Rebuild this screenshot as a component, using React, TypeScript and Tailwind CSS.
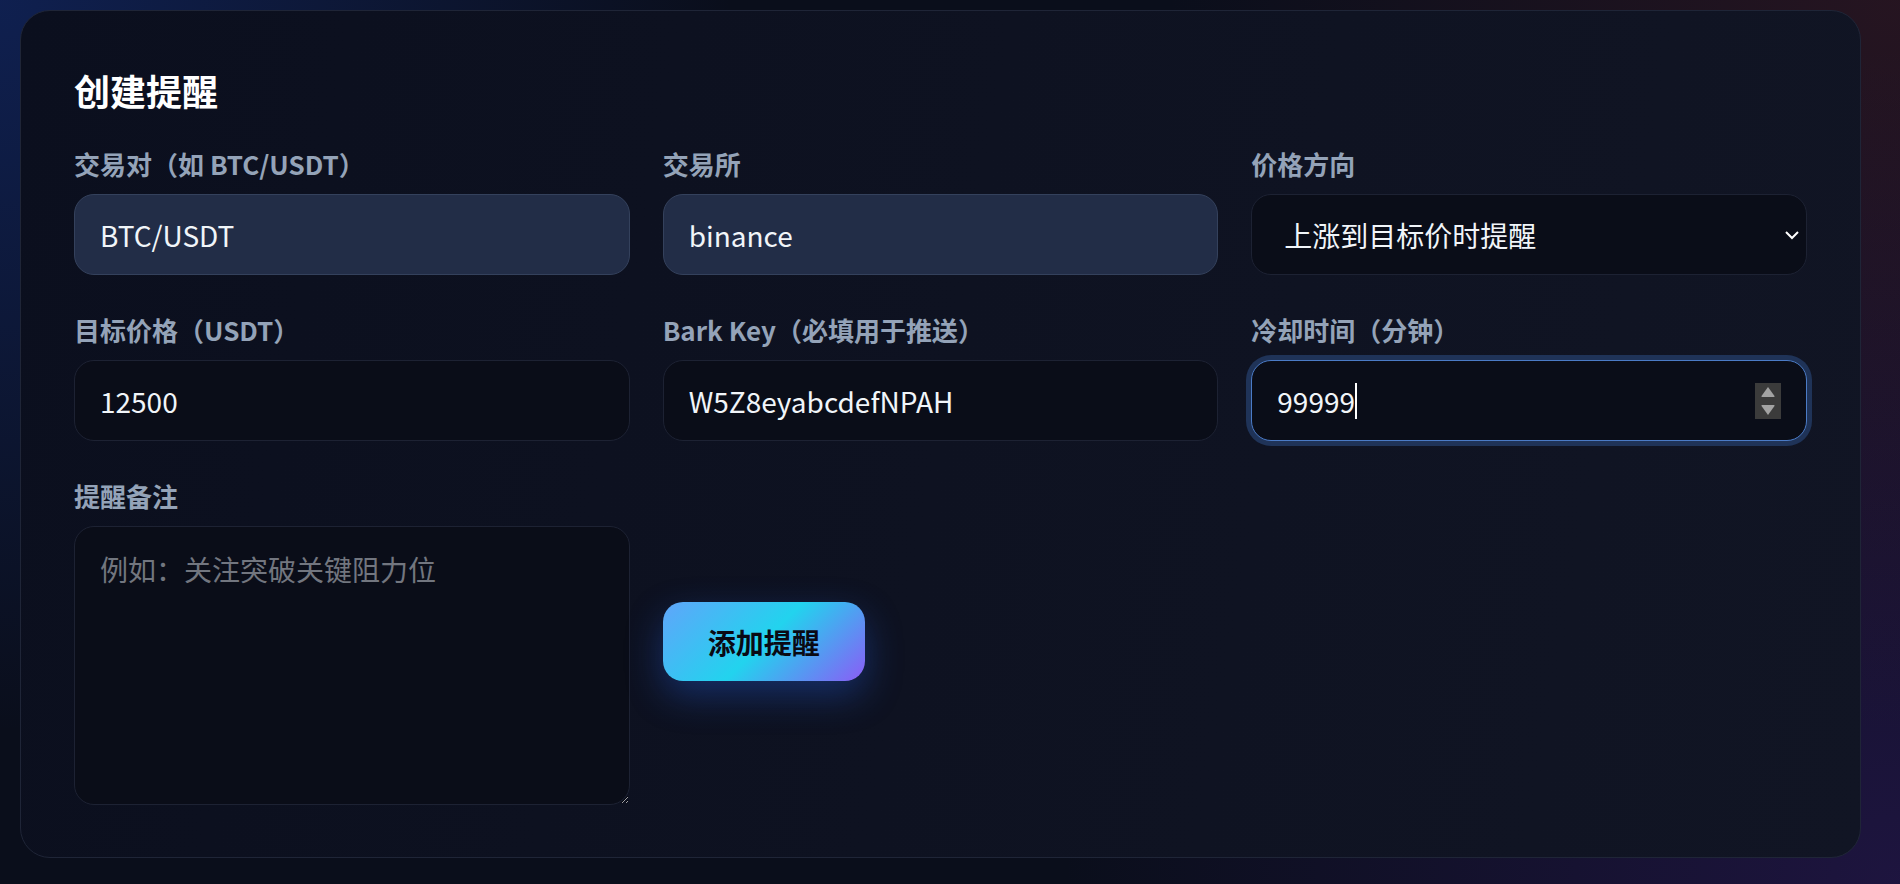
import React from "react";

const fontStack = "font-['Noto_Sans_CJK_SC','Noto_Sans',sans-serif]";

const lightInput =
    "h-[81px] w-full rounded-[20px] border border-[#34415c] bg-[#222d47] pl-[25px] pr-4 text-[28px] text-[#f1f5f9] outline-none";
const darkInput =
    "h-[81px] w-full rounded-[20px] border border-[#1d2233] bg-[#0a0d18] pl-[25px] pr-4 text-[28px] text-[#f1f5f9] outline-none";

function Label({ children }: { children: React.ReactNode }) {
    return (
        <label className="mb-3 block text-[26px] font-bold leading-[36px] text-[#94a3b8]">
            {children}
        </label>
    );
}

function Spinner() {
    // number input stepper (dark color-scheme look)
    return (
        <div className="absolute right-[25px] top-1/2 h-[36px] w-[26px] -translate-y-1/2 bg-[#3b3b3b]">
            <svg width="26" height="36" viewBox="0 0 26 36">
                <path d="M13 4 L19.5 13 Q20 14 18.8 14 L7.2 14 Q6 14 6.5 13 Z" fill="#a3a3a3" />
                <path d="M13 32 L19.5 23 Q20 22 18.8 22 L7.2 22 Q6 22 6.5 23 Z" fill="#a3a3a3" />
            </svg>
        </div>
    );
}

export default function App() {
    return (
        <div
            className={`h-[884px] w-full overflow-hidden bg-[#0a0e1b] bg-[radial-gradient(circle_at_0%_0%,rgba(29,78,216,0.28),transparent_35%),radial-gradient(circle_at_100%_0%,rgba(120,40,50,0.25),transparent_35%),radial-gradient(circle_at_100%_100%,rgba(88,40,170,0.25),transparent_40%)] pl-[20px] pt-[10px] ${fontStack}`}
        >
            <div className="w-[1841px] rounded-[30px] border border-[#1f2537] bg-[linear-gradient(100deg,#0b0f1e,#111524)] px-[53px] pb-[52px] pt-[55px]">
                <h2 className="mb-[32px] text-[36px] font-bold leading-[48px] text-white">创建提醒</h2>

                <div className="grid grid-cols-3 gap-x-[33px] gap-y-[37px]">
                    <div>
                        <Label>交易对（如 BTC/USDT）</Label>
                        <input className={lightInput} defaultValue="BTC/USDT" />
                    </div>
                    <div>
                        <Label>交易所</Label>
                        <input className={lightInput} defaultValue="binance" />
                    </div>
                    <div>
                        <Label>价格方向</Label>
                        <div className="relative">
                            <select
                                className="h-[81px] w-full appearance-none rounded-[20px] border border-[#1d2233] bg-[#0a0d18] pl-[32px] pr-10 text-[28px] text-[#f1f5f9] outline-none"
                                defaultValue="up"
                            >
                                <option value="up">上涨到目标价时提醒</option>
                                <option value="down">下跌到目标价时提醒</option>
                            </select>
                            <svg
                                className="pointer-events-none absolute right-[7px] top-1/2 -translate-y-1/2"
                                width="16"
                                height="10"
                                viewBox="0 0 16 10"
                            >
                                <path d="M2 2 L8 8 L14 2" stroke="#ffffff" strokeWidth="2" fill="none" />
                            </svg>
                        </div>
                    </div>

                    <div>
                        <Label>目标价格（USDT）</Label>
                        <input className={darkInput} defaultValue="12500" />
                    </div>
                    <div>
                        <Label>Bark Key（必填用于推送）</Label>
                        <input className={darkInput} defaultValue="W5Z8eyabcdefNPAH" />
                    </div>
                    <div>
                        <Label>冷却时间（分钟）</Label>
                        <div className="relative flex h-[81px] w-full items-center rounded-[20px] border border-[#4b7bc6] bg-[#0a0d18] pl-[25px] text-[28px] text-[#f1f5f9] shadow-[0_0_0_5px_#1f3358]">
                            <span>99999</span>
                            <span className="h-[36px] w-[2px] bg-white" />
                            <Spinner />
                        </div>
                    </div>

                    <div>
                        <Label>提醒备注</Label>
                        <textarea
                            className="block h-[279px] w-full rounded-[20px] border border-[#1d2233] bg-[#0a0d18] px-[25px] py-[22px] text-[28px] leading-[40px] text-[#f1f5f9] outline-none placeholder:text-[#72767f]"
                            placeholder="例如：关注突破关键阻力位"
                        />
                    </div>
                    <div className="self-center">
                        <button className="h-[79px] w-[202px] rounded-[20px] bg-[linear-gradient(135deg,#60a5fa,#22d3ee_50%,#8b5cf6)] text-[28px] font-bold text-[#0a0a14] shadow-[0_14px_36px_rgba(37,99,235,0.35)]">
                            添加提醒
                        </button>
                    </div>
                </div>
            </div>
        </div>
    );
}
